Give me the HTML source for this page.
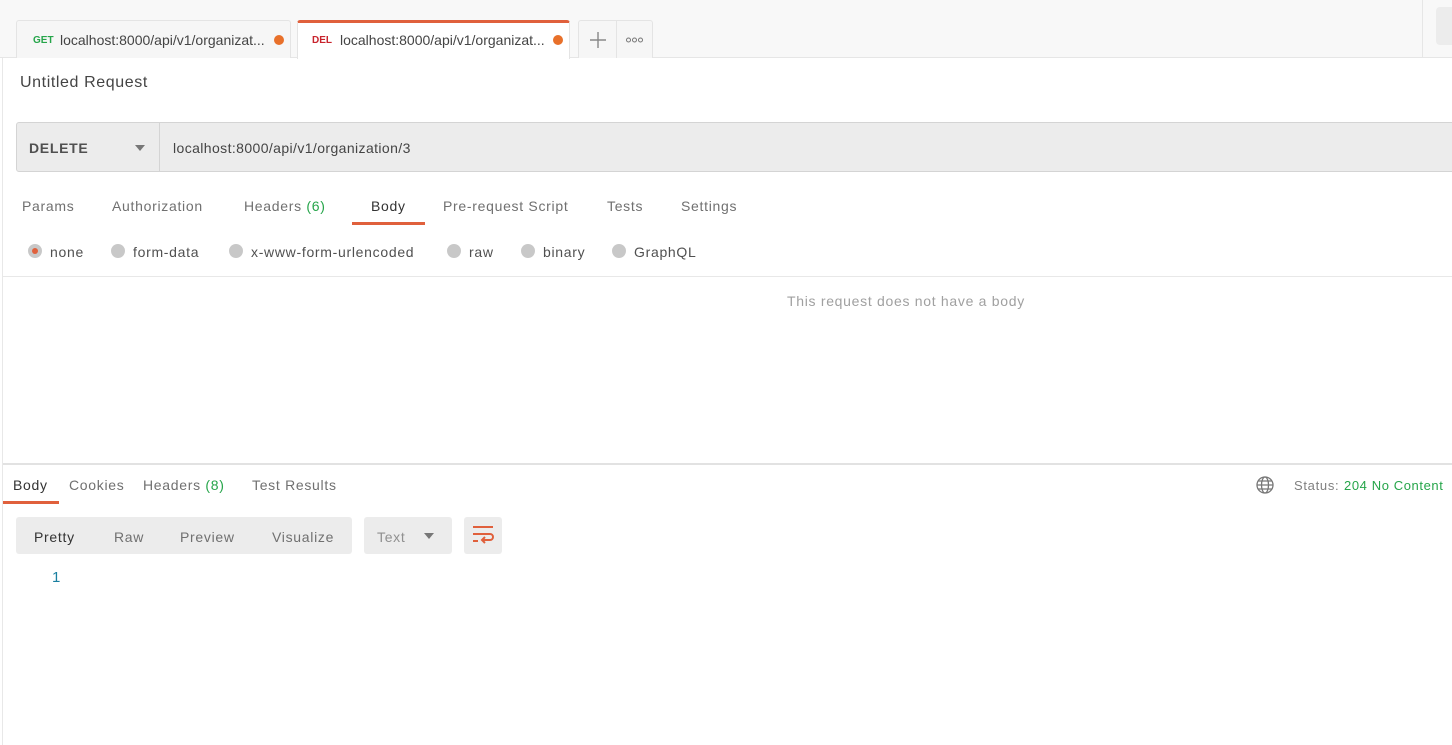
<!DOCTYPE html>
<html><head><style>
*{box-sizing:border-box;margin:0;padding:0}
body{width:1452px;height:745px;overflow:hidden;background:#fff;font-family:"Liberation Sans",sans-serif;font-size:14px;color:#505050;position:relative;letter-spacing:0.7px}
.a{position:absolute;white-space:nowrap}
.tab{position:absolute;top:20px;height:38px;background:#f6f6f6;border:1px solid #e4e4e4;border-bottom:none;border-radius:3px 3px 0 0;letter-spacing:0}
.dot{position:absolute;width:10px;height:10px;border-radius:50%;background:#e8702a;top:14px}
.radio{position:absolute;width:14px;height:14px;border-radius:50%;background:#c8c8c8;top:244px}
</style></head><body>
<div class="a" style="left:0;top:0;width:1452px;height:58px;background:#f8f8f8;border-bottom:1px solid #e6e6e6"></div>
<div class="a" style="left:2px;top:58px;width:1px;height:687px;background:#e8e8e8"></div>
<div class="tab" style="left:16px;width:275px"><span class="a" style="left:16px;top:14px;font-size:10px;font-weight:bold;color:#26a54a">GET</span><span class="a" style="left:43px;top:11px;font-size:14px;color:#444">localhost:8000/api/v1/organizat...</span><div class="dot" style="left:257px"></div></div>
<div class="tab" style="left:297px;width:273px;background:#fff;border-top:3px solid #e0603c;height:39px"><span class="a" style="left:14px;top:12px;font-size:10px;font-weight:bold;color:#c8232c">DEL</span><span class="a" style="left:42px;top:9px;font-size:14px;color:#444">localhost:8000/api/v1/organizat...</span><div class="dot" style="left:255px;top:12px"></div></div>
<div class="tab" style="left:578px;width:75px"><svg class="a" style="left:11px;top:11px" width="16" height="16" viewBox="0 0 16 16" stroke="#888" stroke-width="1.4"><path d="M8 0v16M0 8h16"/></svg><div class="a" style="left:37px;top:0;width:1px;height:37px;background:#e4e4e4"></div><svg class="a" style="left:47px;top:16px" width="17" height="6" viewBox="0 0 17 6" fill="none" stroke="#777" stroke-width="1"><circle cx="2.5" cy="3" r="2"/><circle cx="8.5" cy="3" r="2"/><circle cx="14.5" cy="3" r="2"/></svg></div>
<div class="a" style="left:1422px;top:0;width:1px;height:57px;background:#e6e6e6"></div>
<div class="a" style="left:1436px;top:7px;width:20px;height:38px;background:#ececec;border-radius:4px"></div>
<div class="a" style="left:20px;top:74px;font-size:16px;color:#444;letter-spacing:0.6px">Untitled Request</div>
<div class="a" style="left:16px;top:122px;width:1440px;height:50px;background:#ececec;border:1px solid #d4d4d4;border-radius:3px"></div>
<div class="a" style="left:159px;top:123px;width:1px;height:48px;background:#d4d4d4"></div>
<div class="a" style="left:29px;top:140px;font-weight:bold;color:#505050">DELETE</div>
<div class="a" style="left:135px;top:145px;width:0;height:0;border-left:5px solid transparent;border-right:5px solid transparent;border-top:6px solid #777"></div>
<div class="a" style="left:173px;top:140px;color:#444;letter-spacing:0.4px">localhost:8000/api/v1/organization/3</div>
<div class="a" style="left:22px;top:198px;color:#707070">Params</div>
<div class="a" style="left:112px;top:198px;color:#707070">Authorization</div>
<div class="a" style="left:244px;top:198px;color:#707070">Headers <span style="color:#26a54a">(6)</span></div>
<div class="a" style="left:371px;top:198px;color:#333">Body</div>
<div class="a" style="left:352px;top:222px;width:73px;height:3px;background:#e0603c"></div>
<div class="a" style="left:443px;top:198px;color:#707070">Pre-request Script</div>
<div class="a" style="left:607px;top:198px;color:#707070">Tests</div>
<div class="a" style="left:681px;top:198px;color:#707070">Settings</div>
<div class="radio" style="left:28px"><div class="a" style="left:4px;top:4px;width:6px;height:6px;border-radius:50%;background:#e0603c"></div></div>
<div class="a" style="left:50px;top:244px">none</div>
<div class="radio" style="left:111px"></div><div class="a" style="left:133px;top:244px">form-data</div>
<div class="radio" style="left:229px"></div><div class="a" style="left:251px;top:244px">x-www-form-urlencoded</div>
<div class="radio" style="left:447px"></div><div class="a" style="left:469px;top:244px">raw</div>
<div class="radio" style="left:521px"></div><div class="a" style="left:543px;top:244px">binary</div>
<div class="radio" style="left:612px"></div><div class="a" style="left:634px;top:244px">GraphQL</div>
<div class="a" style="left:3px;top:276px;width:1449px;height:1px;background:#e8e8e8"></div>
<div class="a" style="left:787px;top:293px;color:#a0a0a0">This request does not have a body</div>
<div class="a" style="left:3px;top:463px;width:1449px;height:2px;background:#e2e2e2"></div>
<div class="a" style="left:13px;top:477px;color:#333">Body</div>
<div class="a" style="left:3px;top:501px;width:56px;height:3px;background:#e0603c"></div>
<div class="a" style="left:69px;top:477px;color:#707070">Cookies</div>
<div class="a" style="left:143px;top:477px;color:#707070">Headers <span style="color:#26a54a">(8)</span></div>
<div class="a" style="left:252px;top:477px;color:#707070">Test Results</div>
<svg class="a" style="left:1256px;top:476px" width="18" height="18" viewBox="0 0 18 18" fill="none" stroke="#777" stroke-width="1.3"><circle cx="9" cy="9" r="8"/><ellipse cx="9" cy="9" rx="3.5" ry="8"/><path d="M1 9h16M2.5 5h13M2.5 13h13"/></svg>
<div class="a" style="left:1294px;top:478px;font-size:13px;color:#808080">Status:</div>
<div class="a" style="left:1344px;top:478px;font-size:13px;color:#26a54a;letter-spacing:0.6px">204 No Content</div>
<div class="a" style="left:16px;top:517px;width:336px;height:37px;background:#ececec;border-radius:3px"></div>
<div class="a" style="left:34px;top:529px;color:#333">Pretty</div>
<div class="a" style="left:114px;top:529px;color:#707070">Raw</div>
<div class="a" style="left:180px;top:529px;color:#707070">Preview</div>
<div class="a" style="left:272px;top:529px;color:#707070">Visualize</div>
<div class="a" style="left:364px;top:517px;width:88px;height:37px;background:#ececec;border-radius:3px"></div>
<div class="a" style="left:377px;top:529px;color:#909090">Text</div>
<div class="a" style="left:424px;top:533px;width:0;height:0;border-left:5px solid transparent;border-right:5px solid transparent;border-top:6px solid #777"></div>
<div class="a" style="left:464px;top:517px;width:38px;height:37px;background:#ececec;border-radius:3px"></div>
<svg class="a" style="left:472px;top:524px" width="22" height="22" viewBox="0 0 22 22" fill="none" stroke="#e0603c" stroke-width="2"><path d="M1 3h20M1 10h17a3 3 0 0 1 0 6h-7M13 13l-3 3 3 3M1 17h5"/></svg>
<div class="a" style="left:52px;top:569px;font-size:15px;color:#1a7fa0">1</div>
</body></html>
